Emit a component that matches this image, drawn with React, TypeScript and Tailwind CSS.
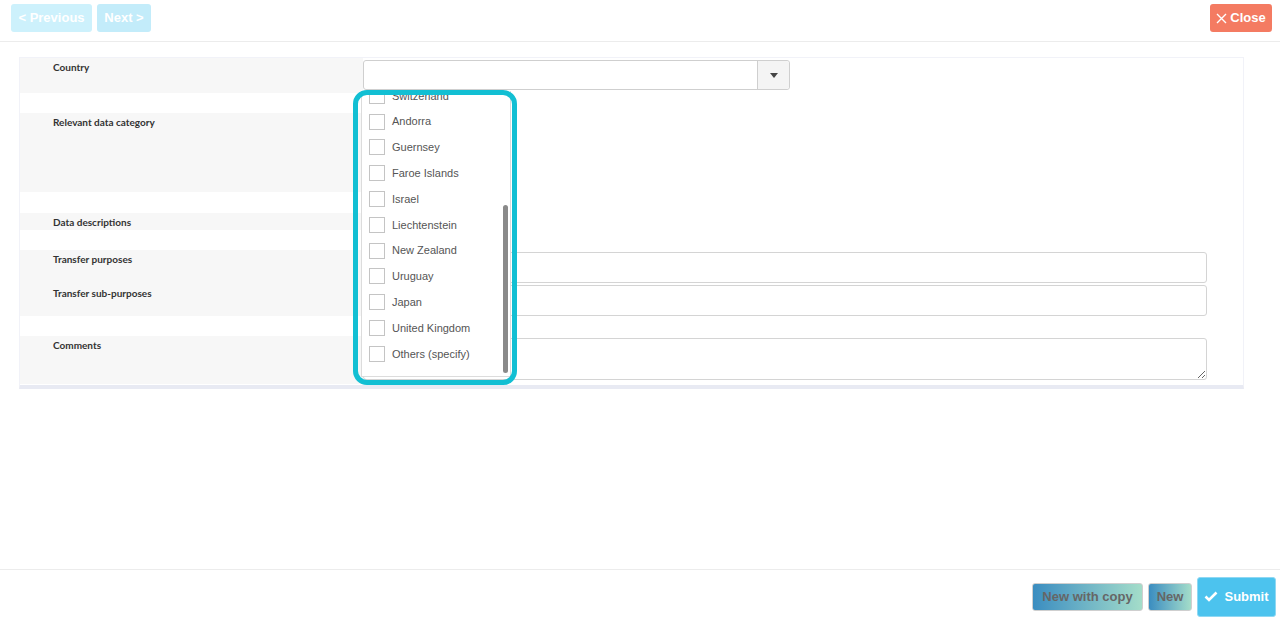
import React from "react";

const countries = [
  "Switzerland",
  "Andorra",
  "Guernsey",
  "Faroe Islands",
  "Israel",
  "Liechtenstein",
  "New Zealand",
  "Uruguay",
  "Japan",
  "United Kingdom",
  "Others (specify)",
];

function Label({ children }: { children: React.ReactNode }) {
  return (
    <div className="w-[343px] shrink-0 bg-[#f7f7f7] pl-[33px] pt-[2px] text-[10px] font-bold text-[#333] [font-family:Lato,'Liberation_Sans',sans-serif]">
      {children}
    </div>
  );
}

export default function App() {
  return (
    <div className="flex h-[623px] w-[1280px] flex-col bg-white [font-family:'Liberation_Sans',Arial,sans-serif]">
      {/* Header */}
      <div className="flex h-[42px] shrink-0 items-start justify-between border-b border-[#ececec] px-[8px] pt-[4px]">
        <div className="flex gap-[5px] pl-[3px]">
          <button className="h-[28px] w-[81px] rounded-[3px] bg-[#cdf1fc] text-[13px] font-bold text-white">
            &lt; Previous
          </button>
          <button className="h-[28px] w-[54px] rounded-[3px] bg-[#c3ecfa] text-[13px] font-bold text-white">
            Next &gt;
          </button>
        </div>
        <button className="flex h-[28px] w-[62px] items-center justify-center gap-[3px] rounded-[3px] bg-[#f47b62] text-[13px] font-bold text-white">
          <svg width="11" height="11" viewBox="0 0 11 11" className="shrink-0">
            <path d="M1 1 L10 10 M10 1 L1 10" stroke="white" strokeWidth="1.4" />
          </svg>
          Close
        </button>
      </div>

      {/* Main */}
      <div className="flex-1 px-[19px] pt-[15px]">
        <div className="relative w-[1225px] border border-[#f1f2f8] border-b-[4px] border-b-[#e8eaf3] pb-[1px]">
          {/* Country */}
          <div className="flex h-[35px]">
            <Label>Country</Label>
            <div className="pt-[2px]">
              <div className="flex h-[30px] w-[427px] rounded-[3px] border border-[#cfcfcf] bg-white">
                <div className="flex-1" />
                <div className="flex w-[32px] items-center justify-center rounded-r-[3px] border-l border-[#cfcfcf] bg-[#f4f4f4]">
                  <svg width="8" height="5" viewBox="0 0 8 5">
                    <path d="M0 0 L8 0 L4 5 Z" fill="#444" />
                  </svg>
                </div>
              </div>
            </div>
          </div>
          <div className="h-[20px]" />
          {/* Relevant data category */}
          <div className="flex h-[79px]">
            <Label>Relevant data category</Label>
          </div>
          <div className="h-[21px]" />
          <div className="flex h-[17px]">
            <Label>Data descriptions</Label>
          </div>
          <div className="h-[20px]" />
          <div className="flex h-[34px]">
            <Label>Transfer purposes</Label>
            <div className="pt-[2px]">
              <div className="h-[31px] w-[844px] rounded-[3px] border border-[#d4d4d4] bg-white" />
            </div>
          </div>
          <div className="flex h-[32px]">
            <Label>Transfer sub-purposes</Label>
            <div className="pt-[1px]">
              <div className="h-[31px] w-[844px] rounded-[3px] border border-[#d4d4d4] bg-white" />
            </div>
          </div>
          <div className="h-[20px]" />
          <div className="flex h-[48px]">
            <Label>Comments</Label>
            <div className="pt-[2px]">
              <textarea className="block h-[42px] w-[844px] resize-y rounded-[3px] border border-[#d4d4d4] bg-white outline-none" />
            </div>
          </div>

          {/* Dropdown list */}
          <div className="absolute left-[341px] top-[33px] h-[286px] w-[150px] overflow-hidden border border-t-0 border-[#dcdcdc] bg-white">
            <div className="-mt-[8px]">
              {countries.map((c) => (
                <div key={c} className="flex h-[25.8px] items-center gap-[7px] pl-[7px]">
                  <span className="block h-[16px] w-[16px] shrink-0 border border-[#c4c4c4] bg-white" />
                  <span className="text-[11px] text-[#555]">{c}</span>
                </div>
              ))}
            </div>
            <div className="absolute right-[2px] top-[114px] h-[168px] w-[5px] rounded-[3px] bg-[#8a8a8a]" />
          </div>
          {/* Highlight frame */}
          <div className="pointer-events-none absolute left-[333px] top-[32px] h-[295px] w-[164px] rounded-[14px] border-[5px] border-[#12bfd3]" />
        </div>
      </div>

      {/* Footer */}
      <div className="flex h-[54px] shrink-0 items-center justify-end gap-[5px] border-t border-[#ececec] pr-[4px]">
        <button className="h-[28px] w-[111px] rounded-[3px] border border-[#cfcfcf] bg-gradient-to-r from-[#3a8dc0] to-[#a4ddc9] text-[13px] font-bold text-[#666]">
          New with copy
        </button>
        <button className="h-[28px] w-[44px] rounded-[3px] border border-[#cfcfcf] bg-gradient-to-r from-[#3a8dc0] to-[#a4ddc9] text-[13px] font-bold text-[#666]">
          New
        </button>
        <button className="flex h-[40px] w-[79px] items-center justify-center gap-[6px] rounded-[3px] border border-[#8fd8f3] bg-[#4cc3ee] text-[13px] font-bold text-white">
          <svg width="14" height="11" viewBox="0 0 14 11">
            <path d="M1.5 5.5 L5 9 L12.5 1.5" stroke="white" strokeWidth="2.6" fill="none" />
          </svg>
          Submit
        </button>
      </div>
    </div>
  );
}
